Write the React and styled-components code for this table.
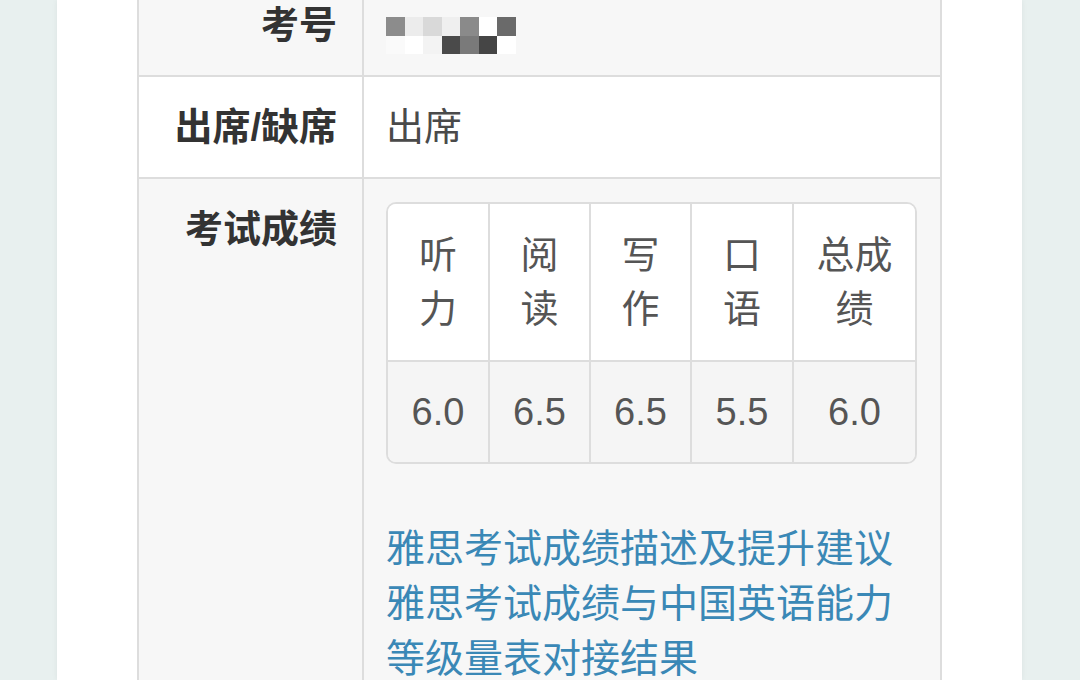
import React from 'react';
import styled, { createGlobalStyle } from 'styled-components';

const GlobalStyle = createGlobalStyle`
  html, body {
    margin: 0;
    padding: 0;
    background: #e8f0ef;
    overflow: hidden;
  }
  body {
    font-family: "Liberation Sans", "Noto Sans CJK SC", sans-serif;
  }
  * { box-sizing: border-box; }
`;

const Page = styled.div`
  height: 680px;
  overflow: hidden;
  padding: 0 58px 0 57px;
`;

const Card = styled.div`
  display: flow-root;
  background: #ffffff;
  height: 100%;
  padding: 0 80px;
  box-shadow: 0 0 6px rgba(0, 0, 0, 0.06);
`;

const InfoTable = styled.div`
  margin-top: -27px;
  border: 2px solid #dddddd;
  border-bottom: none;
`;

const Row = styled.div`
  display: grid;
  grid-template-columns: 225px 1fr;
  background: ${(p) => (p.$striped ? '#f7f7f7' : '#ffffff')};
  border-top: ${(p) => (p.$first ? 'none' : '2px solid #dddddd')};
`;

const Label = styled.div`
  padding: 23px 25px 23px 10px;
  border-right: 2px solid #dddddd;
  text-align: right;
  font-size: 38px;
  line-height: 54px;
  font-weight: bold;
  color: #333333;
  align-self: stretch;
`;

const Value = styled.div`
  padding: 23px 23px 23px 22px;
  font-size: 38px;
  line-height: 54px;
  color: #4a4a4a;
`;

/* blurred candidate number: keeps the 54px line box */
const Mosaic = styled.div`
  display: grid;
  grid-template-columns: repeat(7, 18.5px);
  grid-auto-rows: 18.5px;
  height: 37px;
  margin: 19px 0 -2px;
`;

const Pixel = styled.span`
  background: ${(p) => p.$c};
`;

const ScoreGrid = styled.div`
  display: grid;
  grid-template-columns: 102px 101px 101px 102px 1fr;
  border: 2px solid #dddddd;
  border-radius: 10px;
  overflow: hidden;
  margin-bottom: 57px;
`;

const HeadCell = styled.div`
  background: #ffffff;
  padding: 24px 6px;
  text-align: center;
  font-size: 38px;
  line-height: 54px;
  color: #555555;
  border-right: ${(p) => (p.$last ? 'none' : '2px solid #dddddd')};
`;

const ScoreCell = styled.div`
  background: #f5f5f5;
  padding: 23px 6px;
  text-align: center;
  font-size: 38px;
  line-height: 54px;
  color: #555555;
  border-top: 2px solid #dddddd;
  border-right: ${(p) => (p.$last ? 'none' : '2px solid #dddddd')};
`;

const LinkText = styled.a`
  display: block;
  font-size: 39px;
  line-height: 55px;
  color: #3a88b6;
  text-decoration: none;
`;

const mosaic = [
  '#8c8c8c', '#ececec', '#d9d9d9', '#efefef', '#8a8a8a', '#ffffff', '#6a6a6a',
  '#fafafa', '#ffffff', '#f3f3f3', '#4a4a4a', '#7a7a7a', '#454545', '#ffffff',
];

const sections = [
  { head: ['听', '力'], score: '6.0' },
  { head: ['阅', '读'], score: '6.5' },
  { head: ['写', '作'], score: '6.5' },
  { head: ['口', '语'], score: '5.5' },
  { head: ['总成', '绩'], score: '6.0' },
];

export default function App() {
  return (
    <>
      <GlobalStyle />
      <Page>
        <Card>
          <InfoTable>
            <Row $first $striped>
              <Label>考号</Label>
              <Value>
                <Mosaic>
                  {mosaic.map((c, i) => (
                    <Pixel key={i} $c={c} />
                  ))}
                </Mosaic>
              </Value>
            </Row>
            <Row>
              <Label>出席/缺席</Label>
              <Value>出席</Value>
            </Row>
            <Row $striped>
              <Label>考试成绩</Label>
              <Value>
                <ScoreGrid>
                  {sections.map((s, i) => (
                    <HeadCell key={s.score + i} $last={i === sections.length - 1}>
                      {s.head[0]}
                      <br />
                      {s.head[1]}
                    </HeadCell>
                  ))}
                  {sections.map((s, i) => (
                    <ScoreCell key={'v' + i} $last={i === sections.length - 1}>
                      {s.score}
                    </ScoreCell>
                  ))}
                </ScoreGrid>
                <LinkText href="#">雅思考试成绩描述及提升建议</LinkText>
                <LinkText href="#">雅思考试成绩与中国英语能力等级量表对接结果</LinkText>
              </Value>
            </Row>
          </InfoTable>
        </Card>
      </Page>
    </>
  );
}
